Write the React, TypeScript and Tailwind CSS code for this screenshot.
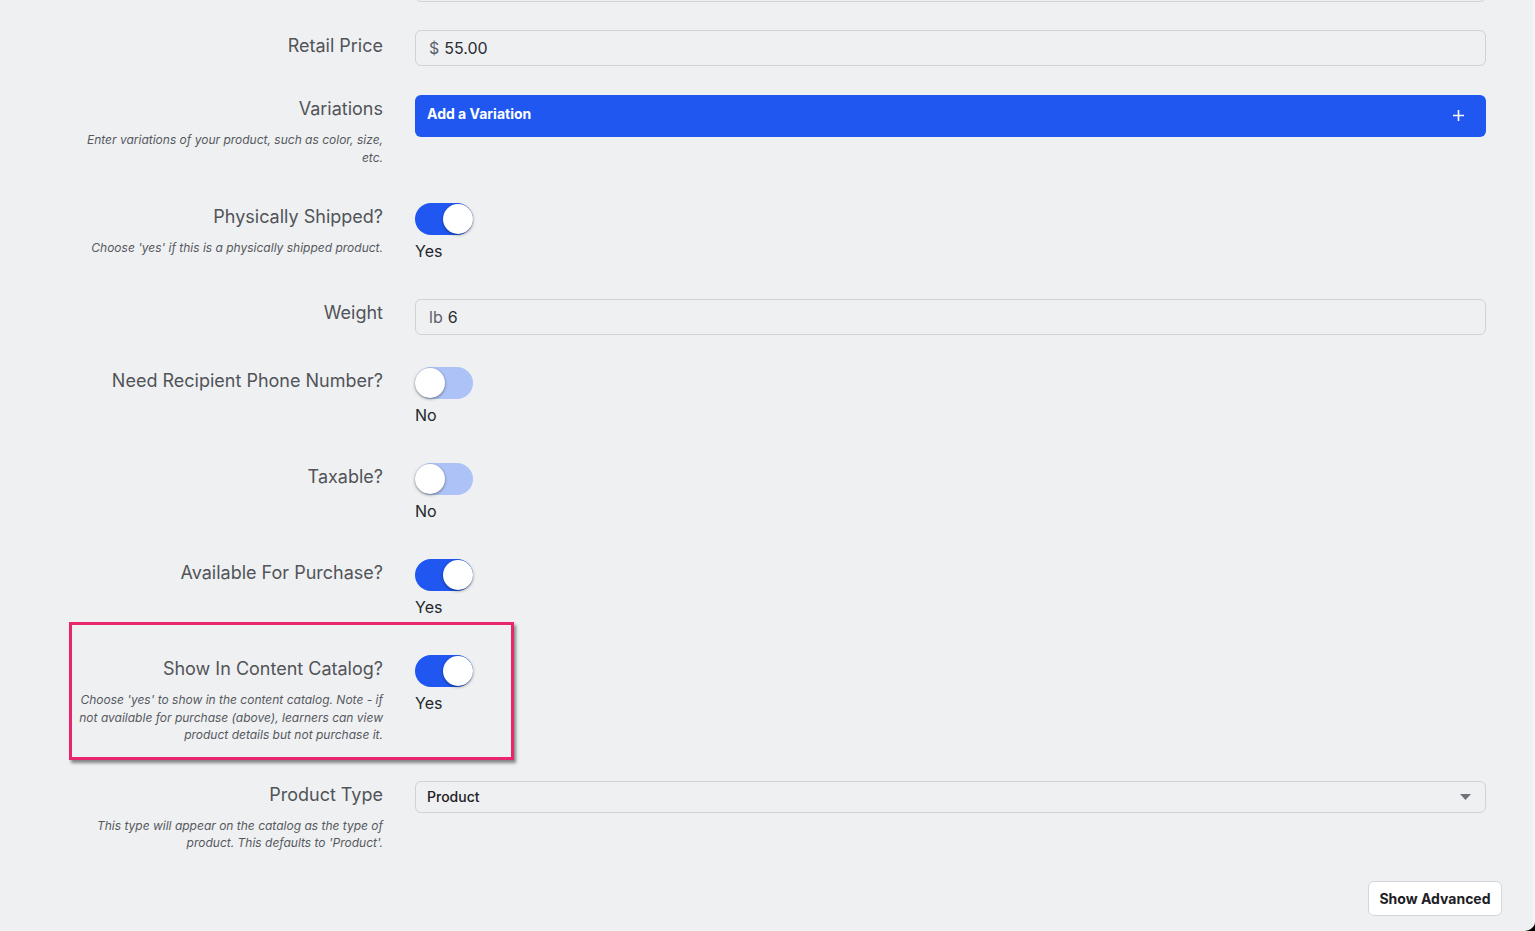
import React from "react";

const font = { fontFamily: "Inter, 'Noto Sans', sans-serif" };

type RowProps = {
  label: string;
  desc?: string;
  className?: string;
  labelClass?: string;
  children: React.ReactNode;
  highlight?: boolean;
};

function Row({ label, desc, className = "", labelClass = "", children, highlight }: RowProps) {
  return (
    <div className={`relative grid grid-cols-[383px_1fr] gap-x-8 pr-[49px] ${className}`}>
      {/* annotation box drawn over the row */}
      {highlight && (
        <div className="pointer-events-none absolute left-[69px] top-[-33px] h-[138px] w-[445px] border-[3px] border-[#e8266d] shadow-[2px_3px_3px_rgba(0,0,0,0.45)]" />
      )}
      <div className="flex flex-col items-end text-right">
        <div className={`text-[18px] leading-[28px] text-[#515458] ${labelClass}`}>{label}</div>
        {desc && (
          <p className="mt-2 max-w-[306px] text-[12px] italic leading-[17.5px] text-[#56595e]">{desc}</p>
        )}
      </div>
      <div>{children}</div>
    </div>
  );
}

function Toggle({ on }: { on: boolean }) {
  return (
    <div>
      <div
        className={`relative h-8 w-[58px] rounded-full ${on ? "bg-[#1f57f0]" : "bg-[#adc2f6]"}`}
      >
        <div
          className={`absolute top-[1px] h-[30px] w-[30px] rounded-full bg-white shadow-[0_1px_3px_rgba(0,0,0,0.45)] ${on ? "right-0" : "left-0"}`}
        />
      </div>
      <div className="mt-1 text-[16px] leading-6 text-[#23262a]">{on ? "Yes" : "No"}</div>
    </div>
  );
}

function TextInput({ prefix, value }: { prefix: string; value: string }) {
  return (
    <div className="flex h-9 items-center rounded-md border border-[#cfd2d7] bg-[#eff0f2] px-[13px] text-[16px]">
      <span className="text-[#5c626b]">{prefix}</span>
      <span className="ml-[5px] text-[#2a2d32]">{value}</span>
    </div>
  );
}

export default function App() {
  return (
    <div className="h-[931px] w-full overflow-hidden bg-black" style={font}>
      <div className="relative h-full overflow-hidden rounded-br-[10px] bg-[#eff0f2]">
        {/* previous field, scrolled mostly out of view */}
        <div className="-mt-[34px] grid grid-cols-[383px_1fr] gap-x-8 pr-[49px]">
          <div />
          <div className="h-9 rounded-md border border-[#cfd2d7]" />
        </div>

        <Row label="Retail Price" className="mt-7" labelClass="mt-[2px]">
          <TextInput prefix="$" value="55.00" />
        </Row>

        <Row
          label="Variations"
          desc="Enter variations of your product, such as color, size, etc."
          className="mt-[29px]"
        >
          <button className="flex h-[42px] w-full items-center justify-between rounded-md bg-[#1f57f0] pl-3 pr-[21px] text-[14px] font-bold text-white">
            <span className="-mt-[5px]">Add a Variation</span>
            <svg width="13" height="13" viewBox="0 0 13 13" className="-mt-[2px]">
              <path d="M6.5 1v11M1 6.5h11" stroke="white" strokeWidth="1.6" />
            </svg>
          </button>
        </Row>

        <Row
          label="Physically Shipped?"
          desc="Choose 'yes' if this is a physically shipped product."
          className="mt-[37px]"
        >
          <Toggle on />
        </Row>

        <Row label="Weight" className="mt-[36px]">
          <TextInput prefix="lb" value="6" />
        </Row>

        <Row label="Need Recipient Phone Number?" className="mt-8">
          <Toggle on={false} />
        </Row>

        <Row label="Taxable?" className="mt-9">
          <Toggle on={false} />
        </Row>

        <Row label="Available For Purchase?" className="mt-9">
          <Toggle on />
        </Row>

        <Row
          label="Show In Content Catalog?"
          desc="Choose 'yes' to show in the content catalog. Note - if not available for purchase (above), learners can view product details but not purchase it."
          className="mt-9"
          highlight
        >
          <Toggle on />
        </Row>

        <Row
          label="Product Type"
          desc="This type will appear on the catalog as the type of product. This defaults to 'Product'."
          className="mt-[37px]"
        >
          <div className="flex h-8 items-center justify-between rounded-md border border-[#cfd2d7] pl-[11px] pr-[14px]">
            <span className="text-[14px] font-medium text-[#1d2024]">Product</span>
            <svg width="11" height="6" viewBox="0 0 11 6">
              <path d="M0 0h11L5.5 6z" fill="#707379" />
            </svg>
          </div>
        </Row>

        <div className="mt-[29px] flex justify-end pr-[33px]">
          <button className="h-[35px] w-[134px] rounded-md border border-[#d3d6db] bg-white text-[14px] font-bold text-[#1d2025]">
            Show Advanced
          </button>
        </div>

        {/* thin lighter strip on the window's right edge */}
        <div className="pointer-events-none absolute inset-y-0 right-0 w-[2px] bg-[#f5f6f7]" />
      </div>
    </div>
  );
}
